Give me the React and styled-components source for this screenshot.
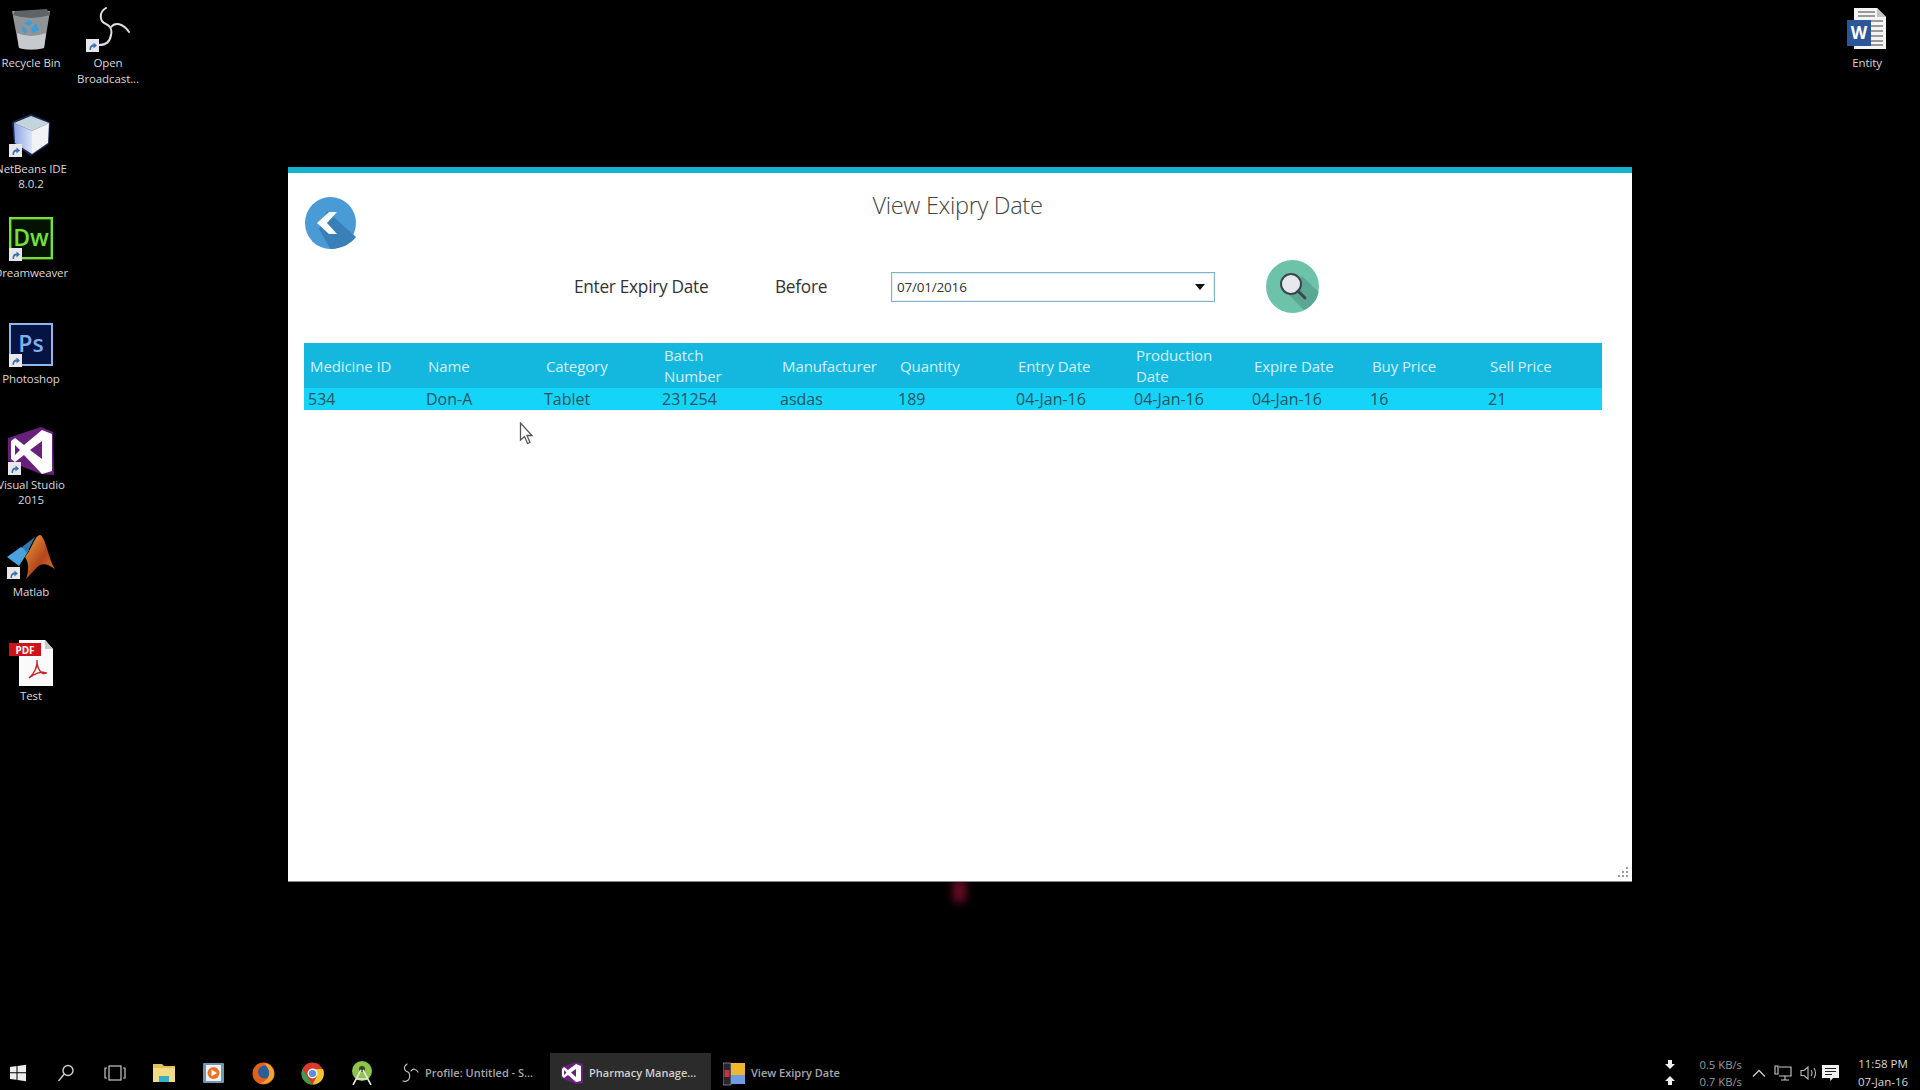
import React from 'react';
import styled, { createGlobalStyle } from 'styled-components';

const FONT = '"Open Sans", "Noto Sans", "Liberation Sans", sans-serif';

const GlobalStyle = createGlobalStyle`
	html, body { margin: 0; padding: 0; background: #000; }
	body { font-family: ${FONT}; overflow: hidden; }
`;

const Desktop = styled.div`
	position: relative;
	width: 1920px;
	height: 1090px;
	background: #000;
	overflow: hidden;
	display: flex;
	flex-direction: column;
	justify-content: flex-end;
`;

const IconColumn = styled.div`
	position: absolute;
	top: ${props => props.top}px;
	left: ${props => props.left}px;
	width: 62px;
	display: flex;
	flex-direction: column;
`;

const DesktopIcon = styled.div`
	height: 105.7px;
	display: flex;
	flex-direction: column;
	align-items: center;
`;

const IconArt = styled.div`
	flex: none;
	height: ${props => props.tall || 44}px;
	margin-top: ${props => props.lift || 0}px;

	> svg {
		display: block;
	}
`;

const IconLabel = styled.div`
	width: 90px;
	flex: none;
	margin-top: 4px;
	font-size: 11.5px;
	line-height: 15.5px;
	color: #d8d8d8;
	text-align: center;
	letter-spacing: -0.1px;
`;

const Shortcut = ({ x = 0, y = 32 }) => (
	<g transform={`translate(${x} ${y})`}>
		<rect width="13" height="13" fill="#e8e8e8" />
		<path d="M3.5 11 C3.5 7 5 5.5 7.5 5.5 V3.5 L11 6.5 L7.5 9.5 V7.5 C6 7.5 5 8.5 5 11 Z" fill="#3f6fb0" />
	</g>
);

const RecycleIcon = () => (
	<svg width="44" height="44" viewBox="0 0 44 44">
		<path d="M3 4 L41 4 L35 41 Q22 44 10 41 Z" fill="#8f9498" />
		<path d="M6 4 L38 2 L41 8 Q22 14 4 8 Z" fill="#5e6367" />
		<path d="M8 26 Q22 32 37 26 L35 41 Q22 44 10 41 Z" fill="#c7cacd" />
		<path d="M15 16 L21 13 L24 16 L20 19 Z M27 16 L30 23 L24 26 L22 22 Z M13 19 L18 22 L17 27 L14 25 Z" fill="#3c9ddc" />
	</svg>
);

const ObsIcon = () => (
	<svg width="44" height="46" viewBox="0 0 44 46">
		<g fill="none" stroke="#dedede" strokeLinecap="round">
			<path d="M20 1 C13 5 13 14 20 17 C25 19 26 24 25 28" strokeWidth="2" />
			<path d="M25 20 C29 15 37 16 43 25" strokeWidth="2" />
			<path d="M25 28 C24 35 20 38 13 38" strokeWidth="2" />
		</g>
		<Shortcut x={0} y={32} />
	</svg>
);

const NetbeansIcon = () => (
	<svg width="44" height="44" viewBox="0 0 44 44">
		<defs>
			<linearGradient id="nbLeft" x1="0" y1="0" x2="1" y2="0">
				<stop offset="0" stopColor="#8ea5e4" />
				<stop offset="1" stopColor="#dbe4f8" />
			</linearGradient>
		</defs>
		<path d="M3 9 L22 1 L41 9 L40 31 L22 43 L5 31 Z" fill="#1b2a5a" />
		<path d="M5 10 L22 3 L40 10 L23 18 Z" fill="#c3d4da" />
		<path d="M5 10 L23 18 L23 41 L6 30 Z" fill="url(#nbLeft)" />
		<path d="M23 18 L40 10 L39 30 L23 41 Z" fill="#f1f3f6" />
		<Shortcut x={0} y={31} />
	</svg>
);

const DreamweaverIcon = () => (
	<svg width="44" height="44" viewBox="0 0 44 44">
		<rect x="1.2" y="1.2" width="41.6" height="40" fill="#041203" stroke="#74e03a" strokeWidth="2.4" />
		<text x="22" y="29" textAnchor="middle" fontFamily="Open Sans" fontWeight="600" fontSize="23" fill="#74e03a">Dw</text>
		<Shortcut x={0} y={31} />
	</svg>
);

const PhotoshopIcon = () => (
	<svg width="44" height="44" viewBox="0 0 44 44">
		<rect x="1" y="1" width="42" height="41" fill="#061443" stroke="#8fb6ee" strokeWidth="2" />
		<text x="22" y="29" textAnchor="middle" fontFamily="Open Sans" fontWeight="600" fontSize="23" fill="#7eb0f0">Ps</text>
		<Shortcut x={0} y={31} />
	</svg>
);

const StudioIcon = () => (
	<svg width="46" height="48" viewBox="0 0 46 48">
		<path d="M0 11 L33 0 L45 5 L46 48 L33 47 L0 34 Z" fill="#68217a" />
		<path d="M34 3 L44 7 L44 44 L34 47 L16 28 L7 35 L3 32 L3 14 L7 11 L16 18 Z M34 14 L22 23 L34 32 Z M7 18 L7 28 L12 23 Z" fill="#fff" fillRule="evenodd" />
		<Shortcut x={0} y={35} />
	</svg>
);

const MatlabIcon = () => (
	<svg width="48" height="44" viewBox="0 0 48 44">
		<defs>
			<linearGradient id="mlPeak" x1="0" y1="0" x2="1" y2="1">
				<stop offset="0" stopColor="#f0a33a" />
				<stop offset="0.55" stopColor="#b5451c" />
				<stop offset="1" stopColor="#e0832e" />
			</linearGradient>
		</defs>
		<path d="M0 22 L14 12 L22 15 L12 31 Z" fill="#4aa3dc" />
		<path d="M15 12 L28 2 L20 18 Z" fill="#2f78ad" />
		<path d="M18 22 C24 16 28 0 33 0 C38 0 42 26 48 34 C42 30 38 28 33 30 C28 33 24 40 19 44 C22 36 22 28 18 22 Z" fill="url(#mlPeak)" />
		<Shortcut x={0} y={32} />
	</svg>
);

const PdfIcon = () => (
	<svg width="44" height="46" viewBox="0 0 44 46">
		<path d="M10 0 L36 0 L44 9 L44 46 L10 46 Z" fill="#fafafa" />
		<path d="M36 0 L36 9 L44 9 Z" fill="#c9c9c9" />
		<rect x="0" y="3" width="32" height="13" fill="#d01318" />
		<text x="16" y="13.5" textAnchor="middle" fontFamily="Open Sans" fontWeight="700" fontSize="10" fill="#fff">PDF</text>
		<path d="M20 38 C25 34 29 26 28 20 C28 30 33 35 37 33 C33 31 26 33 20 38 Z" fill="none" stroke="#c8242a" strokeWidth="1.4" />
	</svg>
);

const WordIcon = () => (
	<svg width="40" height="44" viewBox="0 0 40 44">
		<path d="M7 1 L30 1 L39 10 L39 42 L7 42 Z" fill="#f4f4f4" />
		<path d="M30 1 L30 10 L39 10 Z" fill="#c4c4c4" />
		<path d="M11 5 H28 M11 9 H28 M20 14 H36 M20 19 H36 M20 24 H36 M20 29 H36 M20 34 H36 M11 38 H36" stroke="#9a9a9a" strokeWidth="2" />
		<rect x="0" y="13" width="24" height="26" fill="#2b579a" />
		<text x="12" y="32" textAnchor="middle" fontFamily="Open Sans" fontWeight="700" fontSize="17" fill="#fff">W</text>
	</svg>
);

const AppWindow = styled.div`
	position: absolute;
	left: 288px;
	top: 167px;
	width: 1344px;
	height: 715px;
	box-sizing: border-box;
	background: #fff;
	border-top: 6px solid #16b2d2;
	border-bottom: 1px solid #8a8a8a;
	padding: 17px 30px 0 16px;
`;

// dark red smear in the wallpaper, just under the window
const WallpaperSmear = styled.div`
	position: absolute;
	left: 953px;
	top: 880px;
	width: 13px;
	height: 22px;
	background: #6a0c24;
	filter: blur(4px);
`;

const TitleRow = styled.div`
	display: grid;
	grid-template-columns: 1fr auto 1fr;
	margin-right: -9px;
	align-items: start;
`;

const BackButton = styled.button`
	width: 51px;
	height: 52px;
	margin: 7px 0 0 1px;
	padding: 0;
	border: 0;
	background: none;
	display: block;
`;

const Title = styled.h1`
	margin: 0;
	font-size: 23.6px;
	line-height: 30px;
	font-weight: 300;
	color: #444;
	letter-spacing: -0.33px;
`;

const FilterRow = styled.div`
	display: grid;
	grid-template-columns: 201px 116px 324px 51px 53px;
	align-items: center;
	margin: 11px 0 0 270px;
	height: 53px;
`;

const FilterLabel = styled.span`
	font-size: 17.3px;
	color: #333;
	letter-spacing: -0.3px;
`;

const DateBox = styled.div`
	box-sizing: border-box;
	height: 30px;
	border: 1px solid #7db4c6;
	box-shadow: inset 0 0 0 1px #e4f2f6;
	padding: 1px 9px 0 5px;
	display: flex;
	align-items: center;
	justify-content: space-between;
	font-size: 13.5px;
	color: #333;
	letter-spacing: -0.2px;
`;

const DropArrow = styled.span`
	width: 0;
	height: 0;
	border-left: 5.5px solid transparent;
	border-right: 5.5px solid transparent;
	border-top: 6.5px solid #111;
`;

const SearchButton = styled.button`
	grid-column: 5;
	width: 53px;
	height: 53px;
	padding: 0;
	border: 0;
	background: none;
	display: block;
`;

const Table = styled.table`
	width: 1298px;
	margin-top: 30px;
	border-collapse: collapse;
	table-layout: fixed;
`;

const HeadCell = styled.th`
	height: 45px;
	padding: 1px 20px 0 6px;
	box-sizing: border-box;
	background: #14b8de;
	font-size: 15px;
	line-height: 21px;
	font-weight: 400;
	text-align: left;
	color: #d4f0f8;
	letter-spacing: -0.1px;
`;

const BodyCell = styled.td`
	height: 22px;
	padding: 0 4px;
	box-sizing: border-box;
	background: #14d4f8;
	font-size: 16px;
	line-height: 20px;
	color: #2a5360;
	white-space: nowrap;
`;

const ResizeGrip = styled.svg`
	position: absolute;
	right: 2px;
	bottom: 2px;
`;

const Cursor = styled.svg`
	position: absolute;
	left: 519px;
	top: 422px;
`;

const Taskbar = styled.div`
	height: 40px;
	display: flex;
	align-items: stretch;
	background: #000;
	color: #c8c8c8;
`;

const TaskSlot = styled.div`
	width: ${props => props.wide || 49}px;
	flex: none;
	box-sizing: border-box;
	padding: 6px ${props => props.shift || 0}px 0 0;
	display: flex;
	align-items: center;
	justify-content: center;
`;

const TaskApp = styled.div`
	width: ${props => props.wide}px;
	flex: none;
	box-sizing: border-box;
	margin-top: 3px;
	padding: 2px 0 0 ${props => props.inset || 0}px;
	display: flex;
	align-items: center;
	gap: 6px;
	background: ${props => props.active ? '#2b2b2b' : 'transparent'};
	font-size: 11px;
	font-weight: 600;
	color: ${props => props.active ? '#d0d0d0' : '#a8a8a8'};
	white-space: nowrap;
`;

const Tray = styled.div`
	margin-left: auto;
	padding-top: 5px;
	display: flex;
	align-items: center;
`;

const SpeedArrows = styled.div`
	display: flex;
	flex-direction: column;
	gap: 7px;
	margin-right: 24px;
`;

const SpeedText = styled.div`
	font-size: 11.3px;
	line-height: 17px;
	color: #9a9a9a;
	margin-right: 10px;
`;

const TrayIcon = styled.svg`
	flex: none;
	margin-right: ${props => props.gap}px;
`;

const Clock = styled.div`
	width: 68px;
	margin-right: 3px;
	font-size: 11.5px;
	line-height: 18px;
	text-align: center;
	color: #d8d8d8;
`;

const WinIcon = () => (
	<svg width="18" height="18" viewBox="0 0 18 18">
		<path d="M1 3 L7.5 2 V8.3 H1 Z M8.5 1.9 L17 .7 V8.3 H8.5 Z M1 9.3 H7.5 V15.8 L1 15 Z M8.5 9.3 H17 V17.3 L8.5 16 Z" fill="#eee" />
	</svg>
);

const SearchGlyph = () => (
	<svg width="18" height="18" viewBox="0 0 18 18" fill="none" stroke="#d0d0d0" strokeWidth="1.4">
		<circle cx="11" cy="6.5" r="5" />
		<path d="M7.3 10 L1.5 17" />
	</svg>
);

const TaskViewIcon = () => (
	<svg width="22" height="16" viewBox="0 0 22 16" fill="none" stroke="#c8c8c8" strokeWidth="1.2">
		<rect x="5" y="1" width="12" height="14" />
		<path d="M3 3 H1 V13 H3 M19 3 H21 V13 H19" />
	</svg>
);

const ExplorerIcon = () => (
	<svg width="22" height="20" viewBox="0 0 22 20">
		<path d="M0 1 H9 L11 3 H22 V19 H0 Z" fill="#e4c25a" />
		<rect x="0" y="5" width="22" height="14" fill="#f4dc86" />
		<rect x="6" y="13" width="10" height="6" fill="#37b0c8" />
	</svg>
);

const MediaIcon = () => (
	<svg width="21" height="20" viewBox="0 0 21 20">
		<rect width="21" height="20" rx="1" fill="#6f95b8" />
		<rect x="3" y="2" width="15" height="16" fill="#f2f2f2" />
		<circle cx="10.5" cy="10" r="6" fill="#e8762a" />
		<path d="M8.5 6.8 L14 10 L8.5 13.2 Z" fill="#fff" />
	</svg>
);

const FirefoxIcon = () => (
	<svg width="23" height="23" viewBox="0 0 23 23">
		<circle cx="11.5" cy="11.5" r="11" fill="#e2601f" />
		<circle cx="12.5" cy="10" r="6.5" fill="#2b5d9c" />
		<path d="M12 1 C20 2 23 9 22 14 C20 20 14 23 8 21 C14 20 18 15 17 9 C16 6 14 3 12 1 Z" fill="#f0a52c" />
	</svg>
);

const ChromeIcon = () => (
	<svg width="23" height="23" viewBox="0 0 23 23">
		<circle cx="11.5" cy="11.5" r="11" fill="#d8392f" />
		<path d="M1.5 7 L8 18 L11.5 22.5 A11 11 0 0 1 1.5 7 Z" fill="#36a24a" />
		<path d="M11.5 7 H22 A11 11 0 0 1 11.5 22.5 L16 14 Z" fill="#f3c52e" />
		<circle cx="11.5" cy="11.5" r="5" fill="#f2f2f2" />
		<circle cx="11.5" cy="11.5" r="3.6" fill="#5a8fd8" />
	</svg>
);

const AndroidIcon = () => (
	<svg width="22" height="24" viewBox="0 0 22 24">
		<circle cx="11" cy="10" r="10" fill="#8ec44c" />
		<circle cx="11" cy="8" r="3" fill="#2f4a1e" />
		<path d="M10 9 L2 24 M12 9 L20 24 M5 18 H17" stroke="#e6e6e6" strokeWidth="1.6" fill="none" />
	</svg>
);

const ObsSmall = () => (
	<svg width="18" height="20" viewBox="0 0 18 20" fill="none" stroke="#bdbdbd" strokeWidth="1.2" strokeLinecap="round">
		<path d="M6 1 C2 4 3 8 7 9 C9 10 9 14 8 16 C7 18 4 19 2 18" />
		<path d="M10 8 C12 5 15 6 17 9" />
	</svg>
);

const StudioSmall = () => (
	<svg width="22" height="22" viewBox="0 0 22 22">
		<path d="M0 5 L15 0 L22 2 V21 L15 22 L0 16 Z" fill="#68217a" />
		<path d="M15 2 L20 4 V19 L15 20 L7 13 L3 16 L1 14 V7 L3 5 L7 8 Z M15 7 L10 10.5 L15 15 Z M3 8 V13 L5.5 10.5 Z" fill="#fff" fillRule="evenodd" />
	</svg>
);

const ExpirySmall = () => (
	<svg width="22" height="26" viewBox="0 0 22 26">
		<rect x="0" y="3" width="8" height="22" fill="#26262c" stroke="#bbb" strokeWidth="0.6" />
		<rect x="1.5" y="10" width="5" height="7" fill="#c8323c" />
		<rect x="8" y="3" width="14" height="12" fill="#f1b72c" />
		<rect x="8" y="15" width="14" height="9" fill="#6e9de4" />
	</svg>
);

const COLUMNS = ['Medicine ID', 'Name', 'Category', 'Batch Number', 'Manufacturer', 'Quantity', 'Entry Date', 'Production Date', 'Expire Date', 'Buy Price', 'Sell Price'];
const ROW = ['534', 'Don-A', 'Tablet', '231254', 'asdas', '189', '04-Jan-16', '04-Jan-16', '04-Jan-16', '16', '21'];

const LEFT_ICONS = [
	{ label: 'Recycle Bin', Icon: RecycleIcon },
	{ label: 'NetBeans IDE 8.0.2', Icon: NetbeansIcon },
	{ label: 'Dreamweaver', Icon: DreamweaverIcon, lift: -1 },
	{ label: 'Photoshop', Icon: PhotoshopIcon, lift: -1 },
	{ label: 'Visual Studio 2015', Icon: StudioIcon, lift: -3, tall: 46 },
	{ label: 'Matlab', Icon: MatlabIcon, tall: 45 },
	{ label: 'Test', Icon: PdfIcon, lift: -1, tall: 44 },
];

const App = () => (
	<Desktop>
		<GlobalStyle />

		<IconColumn top={7} left={0}>
			{LEFT_ICONS.map(({ label, Icon, lift, tall }) => (
				<DesktopIcon key={label}>
					<IconArt lift={lift} tall={tall}><Icon /></IconArt>
					<IconLabel>{label}</IconLabel>
				</DesktopIcon>
			))}
		</IconColumn>
		<IconColumn top={7} left={77}>
			<DesktopIcon>
				<IconArt tall={44}><ObsIcon /></IconArt>
				<IconLabel>Open Broadcast...</IconLabel>
			</DesktopIcon>
		</IconColumn>
		<IconColumn top={7} left={1836}>
			<DesktopIcon>
				<IconArt><WordIcon /></IconArt>
				<IconLabel>Entity</IconLabel>
			</DesktopIcon>
		</IconColumn>

		<WallpaperSmear />

		<AppWindow>
			<TitleRow>
				<BackButton aria-label="Back">
					<svg width="51" height="52" viewBox="0 0 51 52">
						<ellipse cx="25.5" cy="26" rx="25.5" ry="26" fill="#4a9ad6" />
						<path d="M22 14 L51 40 C46 47 36 52 25.5 52 L14 32 Z" fill="#3a80b8" />
						<path d="M24 15 L12 26 L24 37 L32 37 L22 26 L32 15 Z" fill="#fff" />
					</svg>
				</BackButton>
				<Title>View Exipry Date</Title>
			</TitleRow>

			<FilterRow>
				<FilterLabel>Enter Expiry Date</FilterLabel>
				<FilterLabel>Before</FilterLabel>
				<DateBox>
					07/01/2016
					<DropArrow />
				</DateBox>
				<SearchButton aria-label="Search">
					<svg width="53" height="53" viewBox="0 0 53 53">
						<circle cx="26.5" cy="26.5" r="26.5" fill="#6cc3aa" />
						<path d="M20 32 L38 50 C46 46 51 40 52.5 32 L36 16 Z" fill="#5aa893" />
						<circle cx="25" cy="24" r="10" fill="#e6e8ec" stroke="#3c4650" strokeWidth="2" />
						<path d="M32 31 L39 38" stroke="#3c4650" strokeWidth="3" strokeLinecap="round" />
					</svg>
				</SearchButton>
			</FilterRow>

			<Table>
				<thead>
					<tr>
						{COLUMNS.map(name => <HeadCell key={name}>{name}</HeadCell>)}
					</tr>
				</thead>
				<tbody>
					<tr>
						{ROW.map((value, index) => <BodyCell key={COLUMNS[index]}>{value}</BodyCell>)}
					</tr>
				</tbody>
			</Table>

			<ResizeGrip width="12" height="12" viewBox="0 0 12 12" fill="#9a9a9a">
				<rect x="8" y="0" width="2" height="2" />
				<rect x="4" y="4" width="2" height="2" />
				<rect x="8" y="4" width="2" height="2" />
				<rect x="0" y="8" width="2" height="2" />
				<rect x="4" y="8" width="2" height="2" />
				<rect x="8" y="8" width="2" height="2" />
			</ResizeGrip>
		</AppWindow>

		<Cursor width="16" height="24" viewBox="0 0 16 24">
			<path d="M1.5 1 V18 L5.5 14.5 L8.5 21.5 L11 20.5 L8 13.5 L13 13.5 Z" fill="#fff" stroke="#555" strokeWidth="1.3" />
		</Cursor>

		<Taskbar>
			<TaskSlot wide={42} shift={6}><WinIcon /></TaskSlot>
			<TaskSlot wide={48}><SearchGlyph /></TaskSlot>
			<TaskSlot><TaskViewIcon /></TaskSlot>
			<TaskSlot wide={50}><ExplorerIcon /></TaskSlot>
			<TaskSlot><MediaIcon /></TaskSlot>
			<TaskSlot wide={50}><FirefoxIcon /></TaskSlot>
			<TaskSlot><ChromeIcon /></TaskSlot>
			<TaskSlot><AndroidIcon /></TaskSlot>
			<TaskApp wide={164} inset={15}><ObsSmall />Profile: Untitled - S...</TaskApp>
			<TaskApp wide={161} inset={11} active><StudioSmall />Pharmacy Manage...</TaskApp>
			<TaskApp wide={160} inset={12}><ExpirySmall />View Exipry Date</TaskApp>
			<Tray>
				<SpeedArrows>
					<svg width="10" height="9" viewBox="0 0 10 9"><path d="M3 0 H7 V4 H10 L5 9 L0 4 H3 Z" fill="#eee" /></svg>
					<svg width="10" height="9" viewBox="0 0 10 9"><path d="M5 0 L10 5 H7 V9 H3 V5 H0 Z" fill="#eee" /></svg>
				</SpeedArrows>
				<SpeedText>0.5 KB/s<br />0.7 KB/s</SpeedText>
				<TrayIcon gap={8} width="14" height="8" viewBox="0 0 14 8" fill="none" stroke="#ccc" strokeWidth="1.3"><path d="M1 7.5 L7 1.5 L13 7.5" /></TrayIcon>
				<TrayIcon gap={8} width="18" height="18" viewBox="0 0 18 18" fill="none" stroke="#ccc" strokeWidth="1.1"><path d="M5 3 H17 V12 H5 M11 12 V16 M7 16 H15 M1 2 H4 V10 H1 Z" /></TrayIcon>
				<TrayIcon gap={5} width="17" height="16" viewBox="0 0 17 16" fill="none" stroke="#bbb" strokeWidth="1.1"><path d="M1 5.5 H4 L8 2 V14 L4 10.5 H1 Z M11 5 Q13 8 11 11 M14 3 Q17 8 14 13" /></TrayIcon>
				<TrayIcon gap={10} width="17" height="16" viewBox="0 0 17 16"><path d="M0 0 H17 V13 H11 L8.5 16 L8 13 H0 Z" fill="#f2f2f2" /><path d="M3 3.5 H14 M3 6.5 H14 M3 9.5 H10" stroke="#222" strokeWidth="1" /></TrayIcon>
				<Clock>11:58 PM<br />07-Jan-16</Clock>
			</Tray>
		</Taskbar>
	</Desktop>
);

export default App;
